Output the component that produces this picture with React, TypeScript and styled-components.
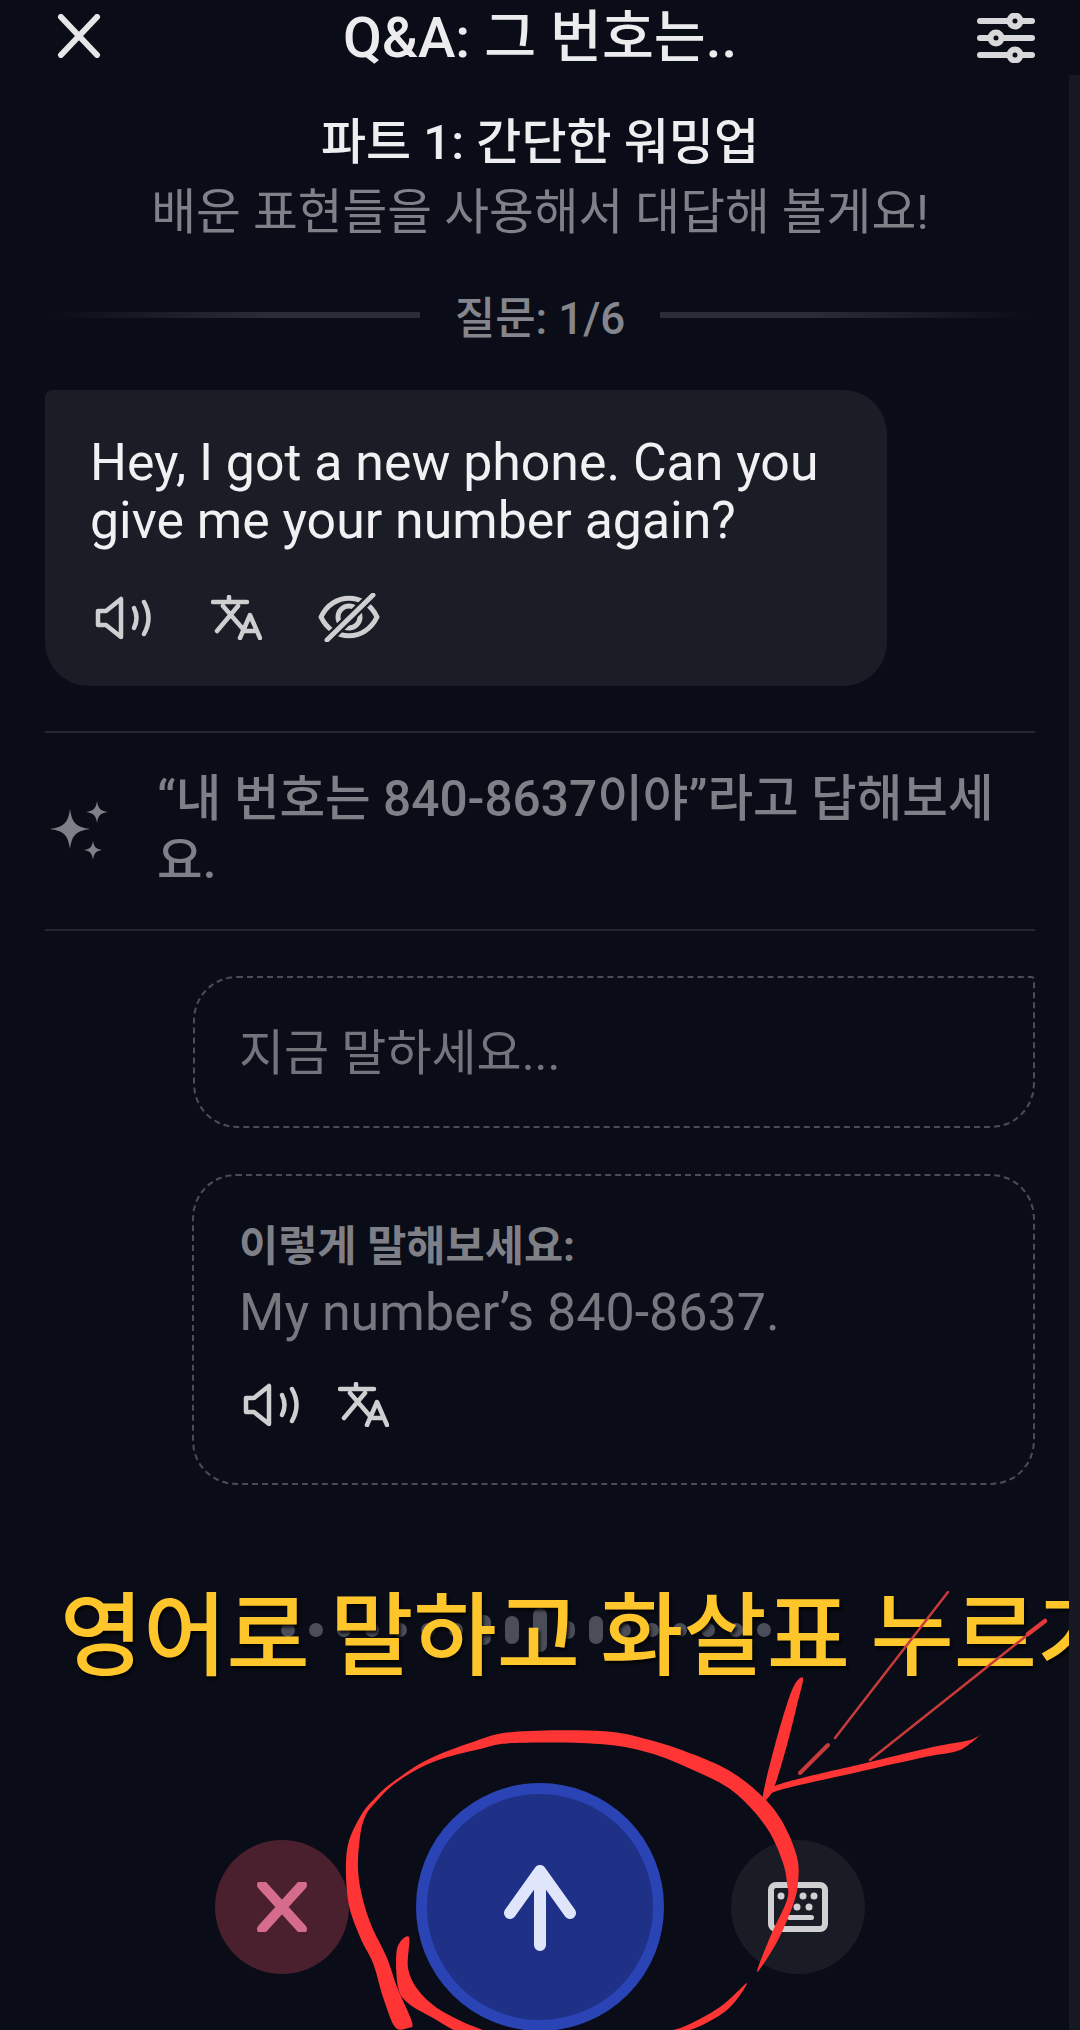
import React from 'react';
import styled, { createGlobalStyle } from 'styled-components';

const GlobalStyle = createGlobalStyle`
  html, body {
    margin: 0;
    padding: 0;
    background: #0a0d17;
  }
  * {
    box-sizing: border-box;
  }
`;

const Page = styled.div`
  position: relative;
  width: 1080px;
  height: 2030px;
  overflow: hidden;
  background: #0a0d17;
  font-family: Roboto, "Noto Sans CJK KR", sans-serif;
  color: #f1f1f3;
`;

const ScrollTrack = styled.div`
  position: absolute;
  top: 75px;
  right: 0;
  bottom: 0;
  width: 11px;
  background: #161822;
`;

const Header = styled.header`
  display: grid;
  grid-template-columns: 1fr auto 1fr;
  align-items: center;
  height: 76px;
  padding: 0 45px;
`;

const HeaderStart = styled.div`
  padding-left: 12px;
`;

const HeaderTitle = styled.h1`
  margin: 0;
  font-size: 56.4px;
  font-weight: 500;
  line-height: 76px;
  color: #ececee;
`;

const HeaderEnd = styled.div`
  display: flex;
  justify-content: flex-end;
`;

const Intro = styled.div`
  display: flex;
  flex-direction: column;
  align-items: center;
  padding-top: 32px;
`;

const PartTitle = styled.div`
  font-size: 49px;
  font-weight: 500;
  line-height: 70px;
  color: #eeeef0;
`;

const PartSub = styled.div`
  font-size: 48.7px;
  line-height: 70px;
  color: #808188;
`;

const Progress = styled.div`
  display: flex;
  align-items: center;
  justify-content: center;
  gap: 35px;
  height: 60px;
  margin: 37px 50px 0;
  font-size: 44px;
  font-weight: 500;
  color: #85868d;
`;

const ProgressLine = styled.div<{ $flip?: boolean }>`
  flex: 1;
  height: 6px;
  background: linear-gradient(
    ${(p) => (p.$flip ? 'to left' : 'to right')},
    rgba(42, 45, 56, 0),
    #2a2d38 60%
  );
`;

const Body = styled.main`
  display: flex;
  flex-direction: column;
  padding: 45px 45px 0;
`;

const Bubble = styled.section`
  width: 842px;
  height: 296px;
  padding: 44px 46px 0 45px;
  border-radius: 8px 44px 44px 44px;
  background: #1a1d26;
`;

const BubbleText = styled.p`
  margin: 0;
  font-size: 51.8px;
  line-height: 58px;
  color: #f1f1f3;
`;

const IconRow = styled.div<{ $gap: number; $top: number; $left: number }>`
  display: flex;
  align-items: center;
  gap: ${(p) => p.$gap}px;
  margin-top: ${(p) => p.$top}px;
  padding-left: ${(p) => p.$left}px;
  color: #cfcfd2;
`;

const HintRow = styled.section`
  display: flex;
  align-items: center;
  gap: 48px;
  height: 200px;
  margin-top: 45px;
  padding-left: 4px;
  border-top: 2px solid #242731;
  border-bottom: 2px solid #242731;
`;

const HintText = styled.p`
  margin: 0 0 2px;
  flex: 1;
  font-size: 49.6px;
  font-weight: 500;
  line-height: 62px;
  color: #7f8087;
`;

const ListeningCard = styled.div`
  align-self: flex-end;
  display: flex;
  align-items: center;
  width: 842px;
  height: 152px;
  margin-top: 45px;
  padding: 0 44px 8px;
  border: 2px dashed #4b4c55;
  border-radius: 44px 4px 44px 44px;
`;

const SuggestCard = styled.div`
  align-self: flex-end;
  width: 843px;
  height: 311px;
  margin-top: 46px;
  padding: 44px 45px 0;
  border: 2px dashed #4b4c55;
  border-radius: 44px;
`;

const Placeholder = styled.div`
  font-size: 49px;
  color: #74757c;
`;

const SuggestLabel = styled.div`
  font-size: 42.6px;
  font-weight: 700;
  line-height: 52px;
  color: #7f8087;
`;

const SuggestText = styled.div`
  margin-top: 9px;
  font-size: 52px;
  line-height: 64px;
  color: #77787f;
`;

const Waveform = styled.div`
  display: flex;
  align-items: center;
  justify-content: center;
  gap: 14px;
  height: 80px;
  margin-top: 105px;
  padding-right: 28px;
`;

const WaveBar = styled.span<{ $h: number }>`
  width: 14px;
  height: ${(p) => p.$h}px;
  border-radius: 7px;
  background: #4b4e59;
`;

const Controls = styled.div`
  display: flex;
  align-items: center;
  justify-content: center;
  gap: 67px;
  margin-top: 113px;
`;

const RoundButton = styled.button<{ $tone: 'cancel' | 'send' | 'plain' }>`
  display: flex;
  align-items: center;
  justify-content: center;
  padding: 0;
  border-radius: 50%;
  width: ${(p) => (p.$tone === 'send' ? 248 : 134)}px;
  height: ${(p) => (p.$tone === 'send' ? 248 : 134)}px;
  border: ${(p) => (p.$tone === 'send' ? '11px solid #2a43b5' : 'none')};
  background: ${(p) =>
    p.$tone === 'send' ? '#1f3186' : p.$tone === 'cancel' ? '#4a202e' : '#191c24'};
  color: ${(p) =>
    p.$tone === 'send' ? '#dfe5fb' : p.$tone === 'cancel' ? '#d56c8b' : '#d0d0d2'};
`;

const Caption = styled.div`
  position: absolute;
  top: 1574px;
  left: 60px;
  white-space: nowrap;
  font-family: "Noto Sans CJK KR", sans-serif;
  font-size: 90.5px;
  font-weight: 500;
  line-height: 110px;
  color: #ffc62c;
  text-shadow: 2px 3px 3px rgba(0, 0, 0, 0.75);
`;

const Scribble = styled.svg`
  position: absolute;
  inset: 0;
  pointer-events: none;
`;

const CloseIcon = () => (
  <svg width="44" height="44" viewBox="0 0 44 44" fill="none" stroke="#e6e6e8" strokeWidth="6" strokeLinecap="round">
    <path d="M4 3 L40 41 M40 3 L4 41" />
  </svg>
);

const SlidersIcon = () => (
  <svg width="58" height="50" viewBox="0 0 58 50" fill="none" stroke="#d8d8da" strokeWidth="6" strokeLinecap="round">
    <path d="M3 8H31M45 8H55M3 25H12M26 25H55M3 42H31M45 42H55" />
    <circle cx="38" cy="8" r="5.5" />
    <circle cx="19" cy="25" r="5.5" />
    <circle cx="38" cy="42" r="5.5" />
  </svg>
);

const SpeakerIcon = () => (
  <svg width="60" height="44" viewBox="0 0 60 44" fill="none" stroke="currentColor" strokeWidth="4.5" strokeLinecap="round" strokeLinejoin="round">
    <path d="M3 15 H11 L26 3 V41 L11 29 H3 Z" />
    <path d="M39 12 Q44 22 39 32" />
    <path d="M49 6 Q58 22 49 38" />
  </svg>
);

const TranslateIcon = () => (
  <svg width="51" height="45" viewBox="0 0 51 45" fill="none" stroke="currentColor" strokeWidth="4.5" strokeLinecap="round" strokeLinejoin="round">
    <path d="M2 7H36M18 2V7M12 11L32 34M27 11L6 36" />
    <path d="M29 43L39 20L49 43M33 36H45" />
  </svg>
);

const EyeOffIcon = () => (
  <svg width="62" height="49" viewBox="0 0 62 49" fill="none" stroke="currentColor" strokeWidth="5" strokeLinecap="round" strokeLinejoin="round">
    <path d="M3 24 C15 -1 47 -1 59 24 C47 49 15 49 3 24 Z" />
    <circle cx="31" cy="24" r="11" />
    <path d="M9 47 L55 2" stroke="#1a1d26" strokeWidth="10" />
    <path d="M9 47 L55 2" />
  </svg>
);

const SparkleIcon = () => (
  <svg width="60" height="60" viewBox="0 0 60 60" fill="#7f8087">
    <path d="M21 8 C23 22 27 26 41 28 C27 30 23 34 21 48 C19 34 15 30 1 28 C15 26 19 22 21 8 Z" />
    <path d="M48 0 C49 7 51 10 59 11 C51 12 49 15 48 22 C47 15 45 12 37 11 C45 10 47 7 48 0 Z" />
    <path d="M44 40 C45 46 47 48 53 49 C47 50 45 52 44 59 C43 52 41 50 35 49 C41 48 43 46 44 40 Z" />
  </svg>
);

const ArrowUpIcon = () => (
  <svg width="72" height="88" viewBox="0 0 72 88" fill="none" stroke="currentColor" strokeWidth="12" strokeLinecap="round" strokeLinejoin="round">
    <path d="M36 8V82M6 50L36 8L66 50" />
  </svg>
);

const CrossIcon = () => (
  <svg width="50" height="50" viewBox="0 0 50 50" fill="none" stroke="currentColor" strokeWidth="10" strokeLinecap="round">
    <path d="M5 3 L45 47 M45 3 L5 47" />
  </svg>
);

const KeyboardIcon = () => (
  <svg width="60" height="50" viewBox="0 0 60 50" fill="none">
    <rect x="3" y="3" width="54" height="44" rx="5" stroke="currentColor" strokeWidth="6" />
    <g fill="currentColor">
      <circle cx="13" cy="14" r="3.5" />
      <circle cx="35" cy="14" r="3.5" />
      <circle cx="46" cy="14" r="3.5" />
      <circle cx="29" cy="25" r="3.5" />
      <circle cx="41" cy="25" r="3.5" />
      <rect x="19" y="33" width="27" height="5" rx="2.5" />
    </g>
  </svg>
);

const waveHeights = [14, 14, 14, 14, 14, 14, 14, 30, 28, 44, 18, 28, 14, 14, 14, 14, 14, 14];

type Pt = [number, number];

// closed Catmull-Rom outline through the traced points
const smooth = (pts: Pt[]) => {
  const at = (i: number) => pts[(i + pts.length) % pts.length];
  let d = `M${pts[0][0]} ${pts[0][1]}`;
  pts.forEach((p, i) => {
    const [p0, p2, p3] = [at(i - 1), at(i + 1), at(i + 2)];
    const c1 = [p[0] + (p2[0] - p0[0]) / 6, p[1] + (p2[1] - p0[1]) / 6];
    const c2 = [p2[0] - (p3[0] - p[0]) / 6, p2[1] - (p3[1] - p[1]) / 6];
    d += `C${c1[0]} ${c1[1]} ${c2[0]} ${c2[1]} ${p2[0]} ${p2[1]}`;
  });
  return d + 'Z';
};

const ringStroke: Pt[] = [
  [408, 2028], [395, 2027], [383, 1997], [373, 1963], [360, 1937], [348, 1900], [347, 1850],
  [360, 1817], [375, 1798], [393, 1782], [427, 1760], [473, 1742], [513, 1732], [600, 1731],
  [650, 1740], [700, 1757], [733, 1773], [763, 1797], [783, 1823], [797, 1857], [798, 1883],
  [793, 1905], [777, 1942], [757, 1972], [771, 1935], [787, 1900], [787, 1883], [783, 1863],
  [770, 1833], [750, 1807], [727, 1787], [693, 1770], [650, 1753], [600, 1744], [513, 1743],
  [480, 1749], [433, 1762], [397, 1782], [375, 1803], [365, 1817], [360, 1837], [358, 1870],
  [363, 1900], [372, 1927], [387, 1958], [397, 1987], [412, 2022],
];

const ringTail: Pt[] = [
  [409, 1937], [397, 1949], [398, 1987], [408, 2003], [433, 2018], [463, 2034], [490, 2034],
  [463, 2022], [437, 2008], [418, 1990], [408, 1968],
];

const ringEnd: Pt[] = [
  [747, 1983], [720, 2007], [683, 2027], [660, 2032], [690, 2030], [727, 2010],
];

const arrowStem: Pt[] = [
  [803, 1678], [792, 1690], [775, 1745], [763, 1795], [767, 1799], [775, 1785], [787, 1745], [797, 1705],
];

const arrowWing: Pt[] = [
  [765, 1799], [780, 1790], [867, 1770], [925, 1757], [960, 1750], [982, 1733], [970, 1740],
  [933, 1747], [870, 1762], [777, 1785],
];

export default function App() {
  return (
    <Page>
      <GlobalStyle />
      <Header>
        <HeaderStart>
          <CloseIcon />
        </HeaderStart>
        <HeaderTitle>Q&amp;A: 그 번호는..</HeaderTitle>
        <HeaderEnd>
          <SlidersIcon />
        </HeaderEnd>
      </Header>

      <Intro>
        <PartTitle>파트 1: 간단한 워밍업</PartTitle>
        <PartSub>배운 표현들을 사용해서 대답해 볼게요!</PartSub>
      </Intro>

      <Progress>
        <ProgressLine />
        <span>질문: 1/6</span>
        <ProgressLine $flip />
      </Progress>

      <Body>
        <Bubble>
          <BubbleText>
            Hey, I got a new phone. Can you
            <br />
            give me your number again?
          </BubbleText>
          <IconRow $gap={56} $top={43} $left={5}>
            <SpeakerIcon />
            <TranslateIcon />
            <EyeOffIcon />
          </IconRow>
        </Bubble>

        <HintRow>
          <SparkleIcon />
          <HintText>“내 번호는 840-8637이야”라고 답해보세요.</HintText>
        </HintRow>

        <ListeningCard>
          <Placeholder>지금 말하세요...</Placeholder>
        </ListeningCard>

        <SuggestCard>
          <SuggestLabel>이렇게 말해보세요:</SuggestLabel>
          <SuggestText>My number’s 840-8637.</SuggestText>
          <IconRow $gap={35} $top={37} $left={4}>
            <SpeakerIcon />
            <TranslateIcon />
          </IconRow>
        </SuggestCard>
      </Body>

      <Waveform>
        {waveHeights.map((h, i) => (
          <WaveBar key={i} $h={h} />
        ))}
      </Waveform>

      <Controls>
        <RoundButton $tone="cancel">
          <CrossIcon />
        </RoundButton>
        <RoundButton $tone="send">
          <ArrowUpIcon />
        </RoundButton>
        <RoundButton $tone="plain">
          <KeyboardIcon />
        </RoundButton>
      </Controls>

      <Caption>영어로 말하고 화살표 누르기</Caption>

      {/* hand-drawn circle and arrow marking the send button */}
      <Scribble width="1080" height="2030" viewBox="0 0 1080 2030" fill="#ff3535">
        <path d={smooth(ringStroke)} />
        <path d={smooth(ringTail)} />
        <path d={smooth(ringEnd)} />
        <path d={smooth(arrowStem)} />
        <path d={smooth(arrowWing)} />
        <g fill="none" stroke="#c93a3a" strokeWidth="2.5" strokeLinecap="round">
          <path d="M948 1592 L835 1738" />
          <path d="M828 1745 L800 1773" strokeWidth="4" />
          <path d="M1045 1621 L870 1760" />
          <path d="M1045 1621 L1028 1634" strokeWidth="4.5" stroke="#e23a3a" />
        </g>
      </Scribble>

      <ScrollTrack />
    </Page>
  );
}
